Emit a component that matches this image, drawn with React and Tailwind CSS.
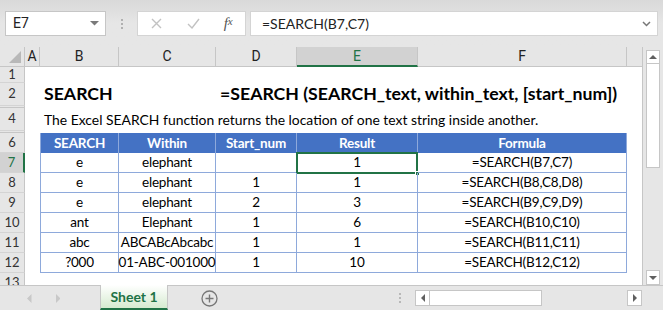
import React from "react";

const rows = [
  ["e", "elephant", "", "1", "=SEARCH(B7,C7)"],
  ["e", "elephant", "1", "1", "=SEARCH(B8,C8,D8)"],
  ["e", "elephant", "2", "3", "=SEARCH(B9,C9,D9)"],
  ["ant", "Elephant", "1", "6", "=SEARCH(B10,C10)"],
  ["abc", "ABCABcAbcabc", "1", "1", "=SEARCH(B11,C11)"],
  ["?000", "01-ABC-001000", "1", "10", "=SEARCH(B12,C12)"],
];

function RowHead({ n, selected }) {
  return (
    <div
      className={
        "w-[25px] shrink-0 h-full flex items-center justify-center text-[13px] border-b border-[#d4d4d4] " +
        (selected
          ? "bg-[#d2d2d2] text-[#217346] border-r-2 border-r-[#217346]"
          : "bg-[#e6e6e6] text-[#333] border-r border-r-[#c6c6c6]")
      }
    >
      {n}
    </div>
  );
}

function Tri({ dir, color, size = 7 }) {
  const pts =
    dir === "down"
      ? "0,0 8,0 4,4"
      : dir === "up"
      ? "0,4 8,4 4,0"
      : dir === "left"
      ? "4,0 4,8 0,4"
      : "0,0 0,8 4,4";
  const vb = dir === "down" || dir === "up" ? "0 0 8 4" : "0 0 4 8";
  const w = dir === "down" || dir === "up" ? size : size / 2;
  const h = dir === "down" || dir === "up" ? size / 2 : size;
  return (
    <svg width={w} height={h} viewBox={vb}>
      <polygon points={pts} fill={color} />
    </svg>
  );
}

export default function App() {
  const widths = ["w-[79px]", "w-[97px]", "w-[81px]", "w-[121px]", "w-[209px]"];
  return (
    <div className="w-[663px] h-[310px] bg-[#e6e6e6] flex flex-col overflow-hidden font-[Lato,sans-serif] text-black">
      {/* toolbar */}
      <div className="h-[47px] shrink-0 bg-gradient-to-b from-[#d9d9d9] via-[#e6e6e6] to-[#e6e6e6] flex items-start pt-[11px] pl-[5px]">
        <div className="w-[101px] h-[25px] bg-white border border-[#c6c6c6] flex items-center justify-between pl-[7px] pr-[6px] text-[14px] font-[Roboto,sans-serif] text-[#222]">
          <span>E7</span>
          <Tri dir="down" color="#7a7a7a" size={9} />
        </div>
        <div className="w-[31px] h-[25px] flex items-center justify-center">
          <div className="flex flex-col gap-[2px]">
            <div className="w-[2px] h-[2px] bg-[#b0b0b0]" />
            <div className="w-[2px] h-[2px] bg-[#b0b0b0]" />
            <div className="w-[2px] h-[2px] bg-[#b0b0b0]" />
          </div>
        </div>
        <div className="w-[109px] h-[25px] bg-white border border-[#d4d4d4] flex items-center">
          <div className="w-[38px] flex justify-center">
            <svg width="11" height="11" viewBox="0 0 11 11">
              <path d="M1 1 L10 10 M10 1 L1 10" stroke="#c2c2c2" strokeWidth="1.4" />
            </svg>
          </div>
          <div className="w-[36px] flex justify-center">
            <svg width="13" height="11" viewBox="0 0 13 11">
              <path d="M1 6 L5 10 L12 1" stroke="#c2c2c2" strokeWidth="1.4" fill="none" />
            </svg>
          </div>
          <div className="w-[34px] flex justify-center text-[#555] font-[Liberation_Serif,serif] italic text-[15px] leading-none">
            f<span className="text-[11px] font-[Liberation_Serif,serif] italic">x</span>
          </div>
        </div>
        <div className="ml-[4px] w-[408px] h-[25px] bg-white border border-[#d4d4d4] flex items-center justify-between pl-[11px] pr-[6px] text-[14px] text-[#222]">
          <span>=SEARCH(B7,C7)</span>
          <svg width="9" height="6" viewBox="0 0 9 6">
            <path d="M1 1 L4.5 4.5 L8 1" stroke="#777" strokeWidth="1.5" fill="none" />
          </svg>
        </div>
      </div>

      {/* main */}
      <div className="h-[238px] shrink-0 flex">
        <div className="w-[643px] flex flex-col border-r border-[#c6c6c6]">
          {/* column header */}
          <div className="h-[20px] shrink-0 flex text-[14px] font-[Roboto,sans-serif] text-[#222]">
            <div className="w-[25px] h-full border-r border-b border-[#c6c6c6] flex items-end justify-end pr-[3px] pb-[3px]">
              <svg width="12" height="12" viewBox="0 0 12 12">
                <polygon points="12,0 12,12 0,12" fill="#b8b8b8" />
              </svg>
            </div>
            <div className="w-[15px] border-r border-b border-[#c6c6c6] flex items-center justify-center">A</div>
            <div className="w-[79px] border-r border-b border-[#c6c6c6] flex items-center justify-center">B</div>
            <div className="w-[97px] border-r border-b border-[#c6c6c6] flex items-center justify-center">C</div>
            <div className="w-[81px] border-r border-b border-[#c6c6c6] flex items-center justify-center">D</div>
            <div className="w-[121px] bg-[#d2d2d2] border-r border-[#c6c6c6] border-b-2 border-b-[#217346] flex items-center justify-center text-[#217346]">E</div>
            <div className="w-[209px] border-r border-b border-[#c6c6c6] flex items-center justify-center">F</div>
            <div className="flex-1 border-b border-[#c6c6c6]" />
          </div>

          {/* row 1 */}
          <div className="h-[16px] shrink-0 flex">
            <RowHead n="1" />
            <div className="flex-1 bg-white" />
          </div>
          {/* row 2 */}
          <div className="h-[23px] shrink-0 flex">
            <RowHead n="2" />
            <div className="flex-1 bg-white flex items-end pb-[3px] text-[17.7px] font-bold leading-none">
              <div className="w-[15px]" />
              <div className="w-[176px] pl-[4px]">SEARCH</div>
              <div className="pl-[4px] whitespace-nowrap">=SEARCH (SEARCH_text, within_text, [start_num])</div>
            </div>
          </div>
          {/* hidden row 3 */}
          <div className="h-[2px] shrink-0 flex">
            <div className="w-[25px] h-full bg-[#e6e6e6] border-r border-r-[#c6c6c6] border-b border-[#c6c6c6]" />
            <div className="flex-1 bg-white" />
          </div>
          {/* row 4 */}
          <div className="h-[23px] shrink-0 flex">
            <RowHead n="4" />
            <div className="flex-1 bg-white flex items-center text-[13.9px] leading-none">
              <div className="w-[15px]" />
              <div className="pl-[4px] whitespace-nowrap">The Excel SEARCH function returns the location of one text string inside another.</div>
            </div>
          </div>
          {/* hidden row 5 */}
          <div className="h-[2px] shrink-0 flex">
            <div className="w-[25px] h-full bg-[#e6e6e6] border-r border-r-[#c6c6c6] border-b border-[#c6c6c6]" />
            <div className="flex-1 bg-white" />
          </div>
          {/* row 6 header */}
          <div className="h-[20px] shrink-0 flex">
            <RowHead n="6" />
            <div className="flex-1 bg-white flex text-[13.5px] tracking-[-0.2px]">
              <div className="w-[15px]" />
              {["SEARCH", "Within", "Start_num", "Result", "Formula"].map((t, i) => (
                <div
                  key={t}
                  className={
                    widths[i] +
                    " h-full bg-[#4472c4] text-white font-bold flex items-center justify-center border-r border-[#8ea9db] " +
                    (i === 0 ? "border-l " : "")
                  }
                >
                  {t}
                </div>
              ))}
            </div>
          </div>
          {rows.map((r, ri) => (
            <div key={ri} className="h-[20px] shrink-0 flex">
              <RowHead n={String(7 + ri)} selected={ri === 0} />
              <div className="flex-1 bg-white flex text-[13.5px] tracking-[-0.2px]">
                <div className="w-[15px]" />
                {r.map((t, i) => (
                  <div
                    key={i}
                    className={
                      widths[i] +
                      " h-full relative flex items-center justify-center whitespace-nowrap border-r border-b border-[#8ea9db] " +
                      (i === 0 ? "border-l " : "")
                    }
                  >
                    {t}
                    {ri === 0 && i === 3 && (
                      <div className="absolute left-[-1px] top-[-1px] w-[122px] h-[22px] border-2 border-[#217346]">
                        <div className="absolute right-[-4px] bottom-[-4px] w-[5px] h-[5px] bg-[#217346] border border-white" />
                      </div>
                    )}
                  </div>
                ))}
              </div>
            </div>
          ))}
          {/* row 13 partial */}
          <div className="flex-1 flex overflow-hidden">
            <div className="w-[25px] shrink-0 bg-[#e6e6e6] border-r border-[#c6c6c6] flex justify-center pt-[3px] text-[13px] text-[#333] leading-none">13</div>
            <div className="flex-1 bg-white" />
          </div>
        </div>

        {/* vertical scrollbar */}
        <div className="flex-1 flex flex-col pl-[3px] pr-[3px] pt-[3px]">
          <div className="h-[14px] bg-white border border-[#c6c6c6] flex items-center justify-center">
            <Tri dir="up" color="#606060" size={8} />
          </div>
          <div className="h-[104px] bg-white border border-t-0 border-[#c6c6c6]" />
          <div className="flex-1" />
          <div className="h-[15px] bg-white border border-[#c6c6c6] flex items-center justify-center">
            <Tri dir="down" color="#606060" size={8} />
          </div>
        </div>
      </div>

      {/* bottom bar */}
      <div className="h-[25px] shrink-0 flex border-t border-[#c6c6c6]">
        <div className="w-[100px] flex items-center pl-[27px] gap-[24px]">
          <Tri dir="left" color="#c8c8c8" size={9} />
          <Tri dir="right" color="#c8c8c8" size={9} />
        </div>
        <div className="w-[68px] -mt-px bg-gradient-to-b from-white to-[#d6ebd0] border-l border-r border-[#c6c6c6] border-b-2 border-b-[#217346] flex items-center justify-center text-[#217346] font-bold text-[14px]">
          Sheet 1
        </div>
        <div className="w-[82px] flex items-center justify-center">
          <svg width="17" height="17" viewBox="0 0 17 17">
            <circle cx="8.5" cy="8.5" r="7.5" stroke="#777" strokeWidth="1.3" fill="none" />
            <path d="M8.5 4.5 V12.5 M4.5 8.5 H12.5" stroke="#777" strokeWidth="1.4" />
          </svg>
        </div>
        <div className="w-[165px] flex items-center justify-end pr-[14px]">
          <div className="flex flex-col gap-[2px]">
            <div className="w-[2px] h-[2px] bg-[#b8b8b8]" />
            <div className="w-[2px] h-[2px] bg-[#b8b8b8]" />
            <div className="w-[2px] h-[2px] bg-[#b8b8b8]" />
          </div>
        </div>
        <div className="w-[227px] flex items-start pt-[4px]">
          <div className="w-[15px] h-[16px] bg-white border border-[#c6c6c6] flex items-center justify-center">
            <Tri dir="left" color="#606060" size={8} />
          </div>
          <div className="w-[112px] h-[16px] bg-white border border-l-0 border-[#c6c6c6]" />
          <div className="flex-1" />
          <div className="w-[15px] h-[16px] bg-white border border-[#c6c6c6] flex items-center justify-center">
            <Tri dir="right" color="#606060" size={8} />
          </div>
        </div>
      </div>
    </div>
  );
}
